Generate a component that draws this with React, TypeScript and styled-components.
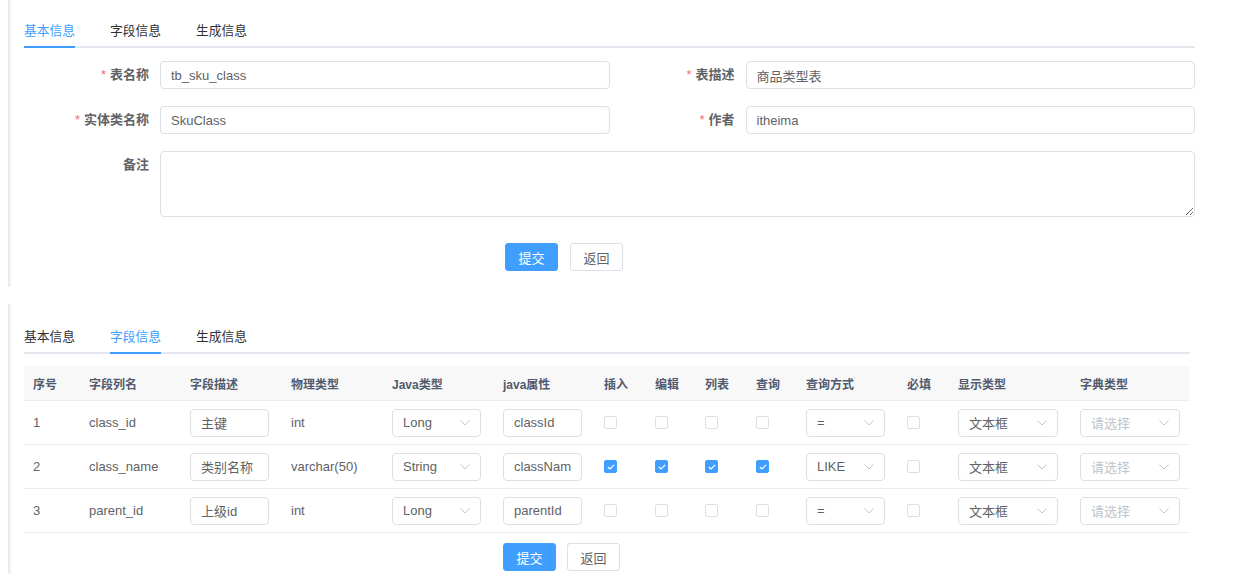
import React from 'react'
import styled, { createGlobalStyle } from 'styled-components'

const GlobalStyle = createGlobalStyle`
  html, body {
    margin: 0;
    padding: 0;
    background: #ffffff;
  }
  body {
    font-family: "Liberation Sans", "Noto Sans CJK SC", sans-serif;
    font-size: 13px;
    color: #606266;
  }
  * {
    box-sizing: border-box;
  }
`

const Page = styled.div`
  width: 1234px;
  padding-left: 8px;
`

const Panel = styled.section<{ $top: number; $right: number; $bottom: number }>`
  padding: ${(p) => p.$top}px ${(p) => p.$right}px ${(p) => p.$bottom}px 16px;
  background: linear-gradient(to right, #e6e6e6 0, #f3f3f3 2px, #ffffff 4px);

  & + & {
    margin-top: 17px;
  }
`

const TabBar = styled.div`
  display: flex;
  gap: 35px;
  border-bottom: 2px solid #e4e7ed;
`

const Tab = styled.div<{ $active?: boolean }>`
  height: 32px;
  line-height: 30px;
  margin-bottom: -2px;
  font-size: 12.75px;
  color: ${(p) => (p.$active ? '#409eff' : '#303133')};
  border-bottom: 2px solid ${(p) => (p.$active ? '#409eff' : 'transparent')};
`

const Form = styled.div`
  margin-top: 13px;
  display: flex;
  flex-direction: column;
  gap: 17px;
`

const FormRow = styled.div<{ $cols: number }>`
  display: grid;
  grid-template-columns: repeat(${(p) => p.$cols}, 1fr);
`

const FormItem = styled.div`
  display: flex;
  align-items: flex-start;
`

const Label = styled.label`
  width: 136px;
  flex-shrink: 0;
  padding-right: 11px;
  text-align: right;
  line-height: 28px;
  font-size: 13px;
  font-weight: bold;
  color: #606266;
`

const Required = styled.span`
  color: #f56c6c;
  font-weight: normal;
  margin-right: 4px;
`

const TextInput = styled.input`
  flex: 1;
  min-width: 0;
  height: 28px;
  padding: 0 10px;
  border: 1px solid #dcdfe6;
  border-radius: 4px;
  font: inherit;
  font-size: 13px;
  color: #606266;
  background: #ffffff;
  outline: none;
`

const TextArea = styled.textarea`
  flex: 1;
  min-width: 0;
  height: 66px;
  padding: 5px 10px;
  border: 1px solid #dcdfe6;
  border-radius: 4px;
  font: inherit;
  color: #606266;
  resize: vertical;
  outline: none;
  display: block;
`

const Footer = styled.div<{ $mt: number; $gap: number }>`
  display: flex;
  justify-content: center;
  gap: ${(p) => p.$gap}px;
  margin-top: ${(p) => p.$mt}px;
  padding-right: 91px;
`

const Button = styled.button<{ $primary?: boolean }>`
  width: 53px;
  height: 28px;
  padding: 0;
  border-radius: 3px;
  font: inherit;
  font-size: 13px;
  cursor: pointer;
  border: 1px solid ${(p) => (p.$primary ? '#409eff' : '#dcdfe6')};
  background: ${(p) => (p.$primary ? '#409eff' : '#ffffff')};
  color: ${(p) => (p.$primary ? '#ffffff' : '#606266')};
`

const COLS =
  '56px 101px 101px 101px 111px 101px 51px 50px 51px 50px 101px 51px 122px 119px'

const Table = styled.div`
  margin-top: 12px;
`

const HeadRow = styled.div`
  display: grid;
  grid-template-columns: ${COLS};
  height: 35px;
  align-items: center;
  background: #f8f8f9;
  border-bottom: 1px solid #ebeef5;
`

const HeadCell = styled.div`
  padding-left: 9px;
  font-size: 12px;
  font-weight: bold;
  color: #515a6e;
  white-space: nowrap;
`

const BodyRow = styled.div`
  display: grid;
  grid-template-columns: ${COLS};
  height: 44px;
  align-items: center;
  border-bottom: 1px solid #ebeef5;
`

const Cell = styled.div<{ $pr?: number }>`
  display: flex;
  align-items: center;
  padding: 0 ${(p) => p.$pr ?? 13}px 0 9px;
  font-size: 13px;
  color: #606266;
  white-space: nowrap;
  overflow: hidden;
`

const CellInput = styled(TextInput)`
  width: 100%;
`

const Select = styled.div<{ $placeholder?: boolean }>`
  width: 100%;
  height: 28px;
  display: flex;
  align-items: center;
  justify-content: space-between;
  padding: 0 10px;
  border: 1px solid #dcdfe6;
  border-radius: 4px;
  color: ${(p) => (p.$placeholder ? '#c0c4cc' : '#606266')};
`

const Box = styled.span<{ $checked?: boolean }>`
  width: 13px;
  height: 13px;
  border-radius: 2px;
  display: inline-flex;
  align-items: center;
  justify-content: center;
  border: 1px solid ${(p) => (p.$checked ? '#409eff' : '#dcdfe6')};
  background: ${(p) => (p.$checked ? '#409eff' : '#ffffff')};
`

const Chevron = () => (
  <svg width="10" height="6" viewBox="0 0 10 6">
    <polyline points="0.5,0.5 5,5 9.5,0.5" fill="none" stroke="#c0c4cc" strokeWidth="1" />
  </svg>
)

const Checkbox: React.FC<{ checked?: boolean }> = ({ checked }) => (
  <Box $checked={checked}>
    {checked && (
      <svg width="8" height="6" viewBox="0 0 8 6">
        <polyline points="0.8,3 3,5 7.2,0.8" fill="none" stroke="#ffffff" strokeWidth="1.2" />
      </svg>
    )}
  </Box>
)

const SelectField: React.FC<{ value?: string; placeholder?: string }> = ({ value, placeholder }) => (
  <Select $placeholder={!value}>
    <span>{value || placeholder}</span>
    <Chevron />
  </Select>
)

interface Column {
  no: number
  name: string
  desc: string
  type: string
  javaType: string
  javaField: string
  checked: boolean
  query: string
}

const columns: Column[] = [
  { no: 1, name: 'class_id', desc: '主键', type: 'int', javaType: 'Long', javaField: 'classId', checked: false, query: '=' },
  { no: 2, name: 'class_name', desc: '类别名称', type: 'varchar(50)', javaType: 'String', javaField: 'className', checked: true, query: 'LIKE' },
  { no: 3, name: 'parent_id', desc: '上级id', type: 'int', javaType: 'Long', javaField: 'parentId', checked: false, query: '=' },
]

const headers = ['序号', '字段列名', '字段描述', '物理类型', 'Java类型', 'java属性', '插入', '编辑', '列表', '查询', '查询方式', '必填', '显示类型', '字典类型']

const Tabs: React.FC<{ active: number }> = ({ active }) => (
  <TabBar>
    {['基本信息', '字段信息', '生成信息'].map((t, i) => (
      <Tab key={t} $active={i === active}>
        {t}
      </Tab>
    ))}
  </TabBar>
)

export default function App() {
  return (
    <Page>
      <GlobalStyle />
      <Panel $top={16} $right={39} $bottom={16}>
        <Tabs active={0} />
        <Form>
          <FormRow $cols={2}>
            <FormItem>
              <Label><Required>*</Required>表名称</Label>
              <TextInput readOnly defaultValue="tb_sku_class" />
            </FormItem>
            <FormItem>
              <Label><Required>*</Required>表描述</Label>
              <TextInput readOnly defaultValue="商品类型表" />
            </FormItem>
          </FormRow>
          <FormRow $cols={2}>
            <FormItem>
              <Label><Required>*</Required>实体类名称</Label>
              <TextInput readOnly defaultValue="SkuClass" />
            </FormItem>
            <FormItem>
              <Label><Required>*</Required>作者</Label>
              <TextInput readOnly defaultValue="itheima" />
            </FormItem>
          </FormRow>
          <FormRow $cols={1}>
            <FormItem>
              <Label>备注</Label>
              <TextArea readOnly />
            </FormItem>
          </FormRow>
        </Form>
        <Footer $mt={26} $gap={12}>
          <Button $primary>提交</Button>
          <Button>返回</Button>
        </Footer>
      </Panel>

      <Panel $top={18} $right={44} $bottom={10}>
        <Tabs active={1} />
        <Table>
          <HeadRow>
            {headers.map((h) => (
              <HeadCell key={h}>{h}</HeadCell>
            ))}
          </HeadRow>
          {columns.map((c) => (
            <BodyRow key={c.no}>
              <Cell>{c.no}</Cell>
              <Cell>{c.name}</Cell>
              <Cell><CellInput readOnly defaultValue={c.desc} /></Cell>
              <Cell>{c.type}</Cell>
              <Cell><SelectField value={c.javaType} /></Cell>
              <Cell><CellInput readOnly defaultValue={c.javaField} /></Cell>
              <Cell><Checkbox checked={c.checked} /></Cell>
              <Cell><Checkbox checked={c.checked} /></Cell>
              <Cell><Checkbox checked={c.checked} /></Cell>
              <Cell><Checkbox checked={c.checked} /></Cell>
              <Cell><SelectField value={c.query} /></Cell>
              <Cell><Checkbox /></Cell>
              <Cell><SelectField value="文本框" /></Cell>
              <Cell $pr={10}><SelectField placeholder="请选择" /></Cell>
            </BodyRow>
          ))}
        </Table>
        <Footer $mt={10} $gap={11}>
          <Button $primary>提交</Button>
          <Button>返回</Button>
        </Footer>
      </Panel>
    </Page>
  )
}
